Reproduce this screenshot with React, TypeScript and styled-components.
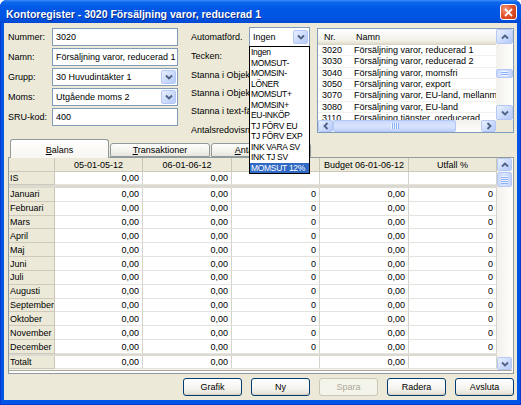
import React from 'react';
import styled, { createGlobalStyle } from 'styled-components';

const FONT = `"Liberation Sans", Arial, sans-serif`;

const GlobalStyle = createGlobalStyle`
  html, body { margin: 0; padding: 0; background: #fff; }
  * { box-sizing: border-box; }
`;

const Window = styled.div`
  width: 521px;
  height: 405px;
  display: flex;
  flex-direction: column;
  background: #0055e5;
  border-radius: 7px 7px 0 0;
  box-shadow: inset 0 0 0 1px #0a3ad0;
  overflow: hidden;
  font-family: ${FONT};
  font-size: 9px;
  color: #000;
`;

const TitleBar = styled.div`
  height: 23px;
  flex: none;
  display: flex;
  align-items: center;
  padding: 0 4px 0 6px;
  background: linear-gradient(180deg, #3d8ff7 0%, #0b66ec 10%, #0058e6 35%, #0054e3 80%, #0048d0 100%);
  color: #fff;
  font-weight: bold;
  font-size: 10.5px;
  text-shadow: 1px 1px #0c2a8a;
`;

const TitleText = styled.span`
  margin-top: 4px;
  white-space: nowrap;
`;

const CloseButton = styled.div`
  margin-left: auto;
  margin-top: 1px;
  width: 17px;
  height: 16px;
  border: 1px solid #fff;
  border-radius: 3px;
  background: radial-gradient(circle at 30% 30%, #f19a7c 0%, #e2552c 45%, #c2350f 100%);
  display: flex;
  align-items: center;
  justify-content: center;
`;

const Body = styled.div`
  flex: 1;
  margin: 0 4px 5px 4px;
  background: #ece9d8;
  display: flex;
  flex-direction: column;
  padding: 4px 3px 0 4px;
`;

const TopSection = styled.div`
  height: 112px;
  flex: none;
  display: flex;
`;

const FormColumn = styled.div`
  width: 170px;
  display: flex;
  flex-direction: column;
  gap: 2px;
  padding-top: 1px;
`;

const FormRow = styled.div`
  display: flex;
  align-items: center;
  height: 18px;
`;

const FormLabel = styled.div<{ $width: number }>`
  width: ${p => p.$width}px;
  flex: none;
  white-space: nowrap;
`;

const TextBox = styled.div<{ $width?: number; $height?: number }>`
  width: ${p => p.$width ?? 126}px;
  height: ${p => p.$height ?? 18}px;
  flex: none;
  border: 1px solid #7f9db9;
  background: #fff;
  display: flex;
  align-items: center;
  padding-left: 3px;
  white-space: nowrap;
  overflow: hidden;
`;

const ComboBox = styled(TextBox)`
  position: relative;
  overflow: visible;
`;

const ComboText = styled.span`
  flex: 1;
  overflow: hidden;
`;

const ComboButton = styled.div`
  width: 15px;
  height: 14px;
  flex: none;
  margin-right: 1px;
  border: 1px solid #b4c8f6;
  border-radius: 2px;
  background: linear-gradient(135deg, #e9f0ff 0%, #c9d8fb 60%, #b6cbf7 100%);
  display: flex;
  align-items: center;
  justify-content: center;
`;

const MiddleColumn = styled.div`
  margin-left: 13px;
  width: 119px;
  display: flex;
  flex-direction: column;
`;

const MiddleTopRow = styled.div`
  height: 20px;
  display: flex;
  align-items: center;
`;

const MiddleLabel = styled.div`
  width: 58px;
  height: 19px;
  display: flex;
  align-items: center;
  white-space: nowrap;
  overflow: hidden;
  &:first-of-type {
    margin-top: 2px;
  }
`;

const DropList = styled.div`
  position: absolute;
  top: 100%;
  left: -1px;
  width: 61px;
  border: 1px solid #000;
  background: #fff;
  overflow: hidden;
  z-index: 10;
  font-size: 8.5px;
  letter-spacing: -0.3px;
`;

const DropItem = styled.div<{ $selected?: boolean }>`
  height: 10.5px;
  line-height: 10.5px;
  padding-left: 1px;
  white-space: nowrap;
  background: ${p => (p.$selected ? '#316ac5' : '#fff')};
  color: ${p => (p.$selected ? '#fff' : '#000')};
`;

const ListBox = styled.div`
  margin-left: auto;
  margin-top: 1px;
  width: 197px;
  height: 105px;
  border: 1px solid #7f9db9;
  background: #fff;
  display: grid;
  grid-template-columns: 178px 17px;
  grid-template-rows: 91px 12px;
`;

const ListView = styled.div`
  overflow: hidden;
  display: flex;
  flex-direction: column;
`;

const ListHeader = styled.div`
  height: 16px;
  flex: none;
  display: flex;
  background: linear-gradient(180deg, #fff 0%, #f3f2ea 70%, #e6e3d3 88%, #d6d2c2 100%);
`;

const ListHeaderCell = styled.div<{ $width?: number }>`
  width: ${p => (p.$width ? `${p.$width}px` : 'auto')};
  flex: ${p => (p.$width ? 'none' : '1')};
  display: flex;
  align-items: center;
  padding-left: 6px;
  position: relative;
  & + &::before {
    content: '';
    position: absolute;
    left: 0;
    top: 4px;
    bottom: 4px;
    width: 1px;
    background: #c7c5b2;
  }
`;

const ListRow = styled.div`
  height: 11.33px;
  flex: none;
  display: flex;
  align-items: center;
  white-space: nowrap;
  border-bottom: 1px solid #f1f0ec;
`;

const ListCell = styled.div<{ $width?: number }>`
  width: ${p => (p.$width ? `${p.$width}px` : 'auto')};
  flex: none;
  padding-left: 4px;
`;

const Corner = styled.div`
  background: #ece9d8;
`;

const ScrollBar = styled.div<{ $dir: 'v' | 'h' }>`
  display: flex;
  flex-direction: ${p => (p.$dir === 'v' ? 'column' : 'row')};
  background: ${p =>
    p.$dir === 'v'
      ? 'linear-gradient(90deg, #f3f1ec 0%, #fefefb 100%)'
      : 'linear-gradient(180deg, #f3f1ec 0%, #fefefb 100%)'};
`;

const ScrollArrow = styled.div<{ $dir: 'v' | 'h'; $size: number }>`
  flex: none;
  width: ${p => (p.$dir === 'v' ? '100%' : `${p.$size}px`)};
  height: ${p => (p.$dir === 'v' ? `${p.$size}px` : '100%')};
  border: 1px solid #b4c8f6;
  border-radius: 2px;
  background: linear-gradient(135deg, #e9f0ff 0%, #c9d8fb 60%, #b6cbf7 100%);
  display: flex;
  align-items: center;
  justify-content: center;
`;

const ScrollTrack = styled.div<{ $dir: 'v' | 'h' }>`
  flex: 1;
  display: flex;
  flex-direction: ${p => (p.$dir === 'v' ? 'column' : 'row')};
`;

const ScrollThumb = styled.div<{ $dir: 'v' | 'h'; $offset: number; $size: number }>`
  flex: none;
  ${p =>
    p.$dir === 'v'
      ? `margin-top: ${p.$offset}px; height: ${p.$size}px; width: 100%;`
      : `margin-left: ${p.$offset}px; width: ${p.$size}px; height: 100%;`}
  border: 1px solid #b4c8f6;
  border-radius: 2px;
  background: ${p =>
    p.$dir === 'v'
      ? 'linear-gradient(90deg, #c9d8fc 0%, #d9e4fd 50%, #c1d2fb 100%)'
      : 'linear-gradient(180deg, #c9d8fc 0%, #d9e4fd 50%, #c1d2fb 100%)'};
  display: flex;
  align-items: center;
  justify-content: center;
`;

const Grip = styled.div<{ $dir: 'v' | 'h'; $len?: number }>`
  width: ${p => (p.$dir === 'v' ? '7px' : `${p.$len ?? 8}px`)};
  height: ${p => (p.$dir === 'v' ? `${p.$len ?? 8}px` : '6px')};
  background: ${p =>
    p.$dir === 'v'
      ? 'repeating-linear-gradient(180deg, #eef4fe 0 1px, #8cb0f8 1px 2px)'
      : 'repeating-linear-gradient(90deg, #eef4fe 0 1px, #8cb0f8 1px 2px)'};
`;

const TabStrip = styled.div`
  height: 18px;
  flex: none;
  display: flex;
  align-items: flex-end;
  padding-left: 2px;
  position: relative;
  z-index: 1;
`;

const Tab = styled.div<{ $active?: boolean }>`
  width: ${p => (p.$active ? 99 : 100)}px;
  height: ${p => (p.$active ? 19 : 14)}px;
  margin-bottom: ${p => (p.$active ? -1 : 0)}px;
  margin-left: ${p => (p.$active ? 0 : 1)}px;
  border: 1px solid #919b9c;
  border-bottom: ${p => (p.$active ? 'none' : '1px solid #919b9c')};
  border-radius: 3px 3px 0 0;
  background: ${p =>
    p.$active ? 'linear-gradient(180deg, #fffffd, #f7f6f1)' : 'linear-gradient(180deg, #fefefe, #f0efe8 70%, #e6e4dc)'};
  display: flex;
  align-items: center;
  justify-content: center;
  white-space: nowrap;
  padding-top: ${p => (p.$active ? 1 : 0)}px;
`;

const TabPanel = styled.div`
  height: 217px;
  flex: none;
  border: 1px solid #919b9c;
  background: #fcfcfe;
`;

const GridWrap = styled.div`
  width: 503px;
  height: 213px;
  display: flex;
  border-bottom: 1px solid #aca899;
  background: #f4f3ee;
`;

const GridTable = styled.div`
  width: 488px;
  display: grid;
  grid-template-columns: 46px 88px 89px 88px 89px 88px;
  grid-template-rows: 14px 13px 3px repeat(12, 13.83px) 2px 13px;
  align-content: start;
`;

const Cell = styled.div<{ $kind: 'head' | 'rowhead' | 'value' }>`
  display: flex;
  align-items: center;
  white-space: nowrap;
  overflow: hidden;
  border-right: 1px solid ${p => (p.$kind === 'value' ? '#d4d3cc' : '#c9c6b8')};
  border-bottom: 1px solid ${p => (p.$kind === 'value' ? '#e4e3de' : '#cdcabc')};
  background: ${p => (p.$kind === 'value' ? '#fff' : '#ece9d8')};
  justify-content: ${p => (p.$kind === 'head' ? 'center' : p.$kind === 'rowhead' ? 'flex-start' : 'flex-end')};
  padding: ${p => (p.$kind === 'rowhead' ? '0 0 0 1px' : p.$kind === 'value' ? '0 3px 0 0' : '0')};
`;

const GridSeparator = styled.div`
  grid-column: 1 / -1;
  background: #dcdad0;
`;

const GridScroll = styled(ScrollBar)`
  width: 15px;
  height: 212px;
`;

const ButtonRow = styled.div`
  display: flex;
  justify-content: flex-end;
  gap: 9px;
  margin-top: 4px;
`;

const XPButton = styled.div<{ $disabled?: boolean }>`
  width: 59px;
  height: 18px;
  border: 1px solid ${p => (p.$disabled ? '#c9c7ba' : '#003c74')};
  border-radius: 3px;
  background: ${p =>
    p.$disabled ? '#f5f4ea' : 'linear-gradient(180deg, #ffffff 0%, #f4f3ee 60%, #e3e0d4 100%)'};
  color: ${p => (p.$disabled ? '#aca899' : '#000')};
  box-shadow: ${p => (p.$disabled ? 'none' : 'inset 0 -1px 0 #d6d0c5')};
  display: flex;
  align-items: center;
  justify-content: center;
`;

const Chevron = ({ dir }: { dir: 'up' | 'down' | 'left' | 'right' }) => {
  const rot = { down: 0, up: 180, left: 90, right: -90 }[dir];
  return (
    <svg width="8" height="8" viewBox="0 0 8 8" style={{ transform: `rotate(${rot}deg)` }}>
      <polyline points="1,2.5 4,5.5 7,2.5" fill="none" stroke="#4d6185" strokeWidth="1.8" />
    </svg>
  );
};

const accounts = [
  ['3020', 'Försäljning varor, reducerad 1'],
  ['3030', 'Försäljning varor, reducerad 2'],
  ['3040', 'Försäljning varor, momsfri'],
  ['3050', 'Försäljning varor, export'],
  ['3070', 'Försäljning varor, EU-land, mellanmanshandel'],
  ['3080', 'Försäljning varor, EU-land'],
  ['3110', 'Försäljning tjänster, oreducerad'],
  ['3120', 'Försäljning tjänster, reducerad 1'],
];

const autoOptions = [
  'Ingen', 'MOMSUT-', 'MOMSIN-', 'LÖNER', 'MOMSUT+', 'MOMSIN+', 'EU-INKÖP',
  'TJ FÖRV EU', 'TJ FÖRV EXP', 'INK VARA SV', 'INK TJ SV', 'MOMSUT 12%',
];

const months = [
  'Januari', 'Februari', 'Mars', 'April', 'Maj', 'Juni', 'Juli',
  'Augusti', 'September', 'Oktober', 'November', 'December',
];

// the third column's caption sits under the open drop-down list
const headers = ['', '05-01-05-12', '06-01-06-12', '', 'Budget 06-01-06-12', 'Utfall %'];

const GridRow = ({ values, head }: { values: string[]; head?: boolean }) => (
  <>
    {values.map((v, i) => (
      <Cell key={i} $kind={head ? 'head' : i === 0 ? 'rowhead' : 'value'}>
        {v}
      </Cell>
    ))}
  </>
);

export default function App() {
  return (
    <>
      <GlobalStyle />
      <Window>
        <TitleBar>
          <TitleText>Kontoregister - 3020 Försäljning varor, reducerad 1</TitleText>
          <CloseButton>
            <svg width="9" height="9" viewBox="0 0 9 9">
              <path d="M1 1 L8 8 M8 1 L1 8" stroke="#fff" strokeWidth="1.8" />
            </svg>
          </CloseButton>
        </TitleBar>
        <Body>
          <TopSection>
            <FormColumn>
              <FormRow>
                <FormLabel $width={44}>Nummer:</FormLabel>
                <TextBox>3020</TextBox>
              </FormRow>
              <FormRow>
                <FormLabel $width={44}>Namn:</FormLabel>
                <TextBox>Försäljning varor, reducerad 1</TextBox>
              </FormRow>
              <FormRow>
                <FormLabel $width={44}>Grupp:</FormLabel>
                <TextBox>
                  <ComboText>30 Huvudintäkter 1</ComboText>
                  <ComboButton><Chevron dir="down" /></ComboButton>
                </TextBox>
              </FormRow>
              <FormRow>
                <FormLabel $width={44}>Moms:</FormLabel>
                <TextBox>
                  <ComboText>Utgående moms 2</ComboText>
                  <ComboButton><Chevron dir="down" /></ComboButton>
                </TextBox>
              </FormRow>
              <FormRow>
                <FormLabel $width={44}>SRU-kod:</FormLabel>
                <TextBox>400</TextBox>
              </FormRow>
            </FormColumn>

            <MiddleColumn>
              <MiddleTopRow>
                <FormLabel $width={58}>Automatförd.</FormLabel>
                <ComboBox $width={61} $height={20}>
                  <ComboText>Ingen</ComboText>
                  <ComboButton><Chevron dir="down" /></ComboButton>
                  <DropList>
                    {autoOptions.map((o, i) => (
                      <DropItem key={o} $selected={i === autoOptions.length - 1}>{o}</DropItem>
                    ))}
                  </DropList>
                </ComboBox>
              </MiddleTopRow>
              <MiddleLabel>Tecken:</MiddleLabel>
              <MiddleLabel>Stanna i Objektnivå 1</MiddleLabel>
              <MiddleLabel>Stanna i Objektnivå 2</MiddleLabel>
              <MiddleLabel>Stanna i text-fältet</MiddleLabel>
              <MiddleLabel>Antalsredovisning</MiddleLabel>
            </MiddleColumn>

            <ListBox>
              <ListView>
                <ListHeader>
                  <ListHeaderCell $width={32}>Nr.</ListHeaderCell>
                  <ListHeaderCell>Namn</ListHeaderCell>
                </ListHeader>
                {accounts.map(([nr, name]) => (
                  <ListRow key={nr}>
                    <ListCell $width={32}>{nr}</ListCell>
                    <ListCell>{name}</ListCell>
                  </ListRow>
                ))}
              </ListView>
              <ScrollBar $dir="v">
                <ScrollArrow $dir="v" $size={15}><Chevron dir="up" /></ScrollArrow>
                <ScrollTrack $dir="v">
                  <ScrollThumb $dir="v" $offset={25} $size={9}>
                    <Grip $dir="v" $len={5} />
                  </ScrollThumb>
                </ScrollTrack>
                <ScrollArrow $dir="v" $size={15}><Chevron dir="down" /></ScrollArrow>
              </ScrollBar>
              <ScrollBar $dir="h">
                <ScrollArrow $dir="h" $size={15}><Chevron dir="left" /></ScrollArrow>
                <ScrollTrack $dir="h">
                  <ScrollThumb $dir="h" $offset={0} $size={123}>
                    <Grip $dir="h" />
                  </ScrollThumb>
                </ScrollTrack>
                <ScrollArrow $dir="h" $size={15}><Chevron dir="right" /></ScrollArrow>
              </ScrollBar>
              <Corner />
            </ListBox>
          </TopSection>

          <TabStrip>
            <Tab $active><span><u>B</u>alans</span></Tab>
            <Tab><span><u>T</u>ransaktioner</span></Tab>
            <Tab><span><u>A</u>ntalsbudget</span></Tab>
          </TabStrip>
          <TabPanel>
            <GridWrap>
              <GridTable>
                <GridRow head values={headers} />
                <GridRow values={['IS', '0,00', '0,00', '', '', '']} />
                <GridSeparator />
                {months.map(m => (
                  <GridRow key={m} values={[m, '0,00', '0,00', '0', '0,00', '0']} />
                ))}
                <GridSeparator />
                <GridRow values={['Totalt', '0,00', '0,00', '', '0,00', '']} />
              </GridTable>
              <GridScroll $dir="v">
                <ScrollArrow $dir="v" $size={13}><Chevron dir="up" /></ScrollArrow>
                <ScrollTrack $dir="v">
                  <ScrollThumb $dir="v" $offset={1} $size={15}>
                    <Grip $dir="v" />
                  </ScrollThumb>
                </ScrollTrack>
                <ScrollArrow $dir="v" $size={13}><Chevron dir="down" /></ScrollArrow>
              </GridScroll>
            </GridWrap>
          </TabPanel>

          <ButtonRow>
            <XPButton>Grafik</XPButton>
            <XPButton>Ny</XPButton>
            <XPButton $disabled>Spara</XPButton>
            <XPButton>Radera</XPButton>
            <XPButton>Avsluta</XPButton>
          </ButtonRow>
        </Body>
      </Window>
    </>
  );
}
